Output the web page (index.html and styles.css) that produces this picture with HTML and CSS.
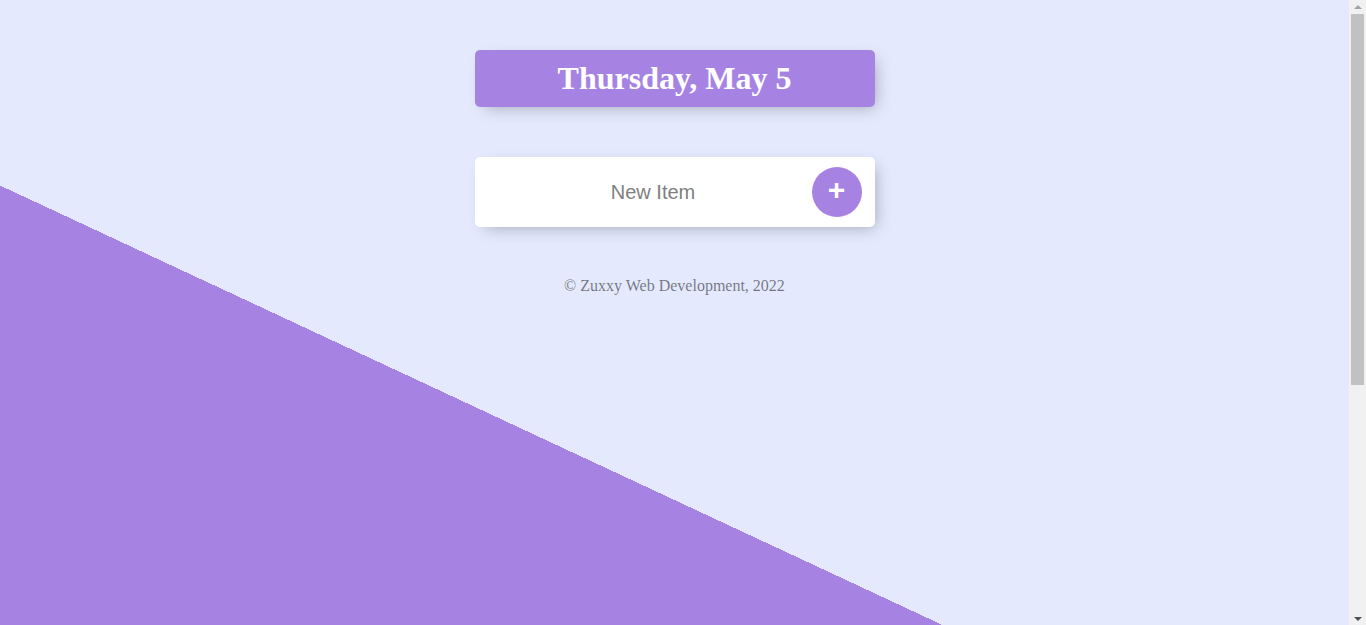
FILE: index.html
```html
<!DOCTYPE html>
<html lang="en" class="page">
<head>
<meta charset="utf-8">
<title>To-Do List</title>
<link rel="stylesheet" href="styles.css">
</head>
<body class="page-body">
  <div class="box heading">
    <h1 class="title">Thursday, May 5</h1>
  </div>
  <div class="box">
    <form class="item new-item" action="/" method="post">
      <input class="new-input" type="text" name="newItem" placeholder="New Item" autocomplete="off">
      <button class="add-btn" type="submit" name="list" value="">+</button>
    </form>
  </div>
  <footer class="footer">© Zuxxy Web Development, 2022</footer>

  <div class="scrollbar" aria-hidden="true">
    <div class="sb-btn"><span class="sb-arrow-up"></span></div>
    <div class="sb-track">
      <div class="sb-thumb"></div>
    </div>
    <div class="sb-btn"><span class="sb-arrow-down"></span></div>
  </div>
</body>
</html>
```
FILE: styles.css
```css
.page {
  background-color: #E4E9FD;
  background-image: linear-gradient(25deg, #A683E3 50%, #E4E9FD 50%);
  min-height: 1000px;
  margin-right: 17px;
  overflow: hidden;
  font-family: "Liberation Serif", "Times New Roman", serif;
}

.page-body {
  margin: 0;
}

.title {
  color: #fff;
  padding: 10px;
  font-size: 32px;
  font-weight: bold;
  margin: 21.44px 0;
}

.box {
  max-width: 400px;
  margin: 50px auto;
  background: white;
  border-radius: 5px;
  box-shadow: 5px 5px 15px -5px rgba(0, 0, 0, 0.3);
}

.heading {
  background-color: #A683E3;
  text-align: center;
}

.item {
  min-height: 70px;
  display: flex;
  align-items: center;
  border-bottom: 1px solid #F1F1F1;
}

.item:last-child {
  border-bottom: 0;
}

.new-item {
  text-align: center;
  margin-left: 20px;
}

.add-btn {
  min-height: 50px;
  width: 50px;
  border-radius: 50%;
  border-color: transparent;
  background-color: #A683E3;
  color: #fff;
  font-family: "Liberation Sans", Arial, sans-serif;
  font-size: 30px;
  font-weight: bold;
  padding: 1px 6px 6px;
  border-width: 0;
}

.new-input {
  text-align: center;
  height: 60px;
  border: none;
  background: transparent;
  font-family: "Liberation Sans", Arial, sans-serif;
  font-size: 20px;
  font-weight: 200;
  width: 313px;
  padding: 1px 2px;
}

.new-input:focus {
  outline: none;
  box-shadow: inset 0 -3px 0 0 #A683E3;
}

.new-input::placeholder {
  color: grey;
  opacity: 1;
}

.footer {
  color: rgba(0, 0, 0, 0.5);
  text-align: center;
  font-size: 16px;
}

/* classic browser scrollbar, drawn over the right edge of the window */
.scrollbar {
  position: fixed;
  top: 0;
  right: 0;
  width: 17px;
  height: 100vh;
  background: #F1F1F1;
  display: flex;
  flex-direction: column;
}

.sb-btn {
  height: 14px;
  flex: none;
  display: flex;
  align-items: center;
  justify-content: center;
}

.sb-arrow-up {
  width: 0;
  height: 0;
  border-left: 4px solid transparent;
  border-right: 4px solid transparent;
  border-bottom: 4px solid #A3A3A3;
}

.sb-arrow-down {
  width: 0;
  height: 0;
  border-left: 4px solid transparent;
  border-right: 4px solid transparent;
  border-top: 4px solid #505050;
  margin-top: 2px;
}

.sb-track {
  flex: 1;
  padding: 0 2px;
}

.sb-thumb {
  height: 371px;
  background: #C1C1C1;
}
```
